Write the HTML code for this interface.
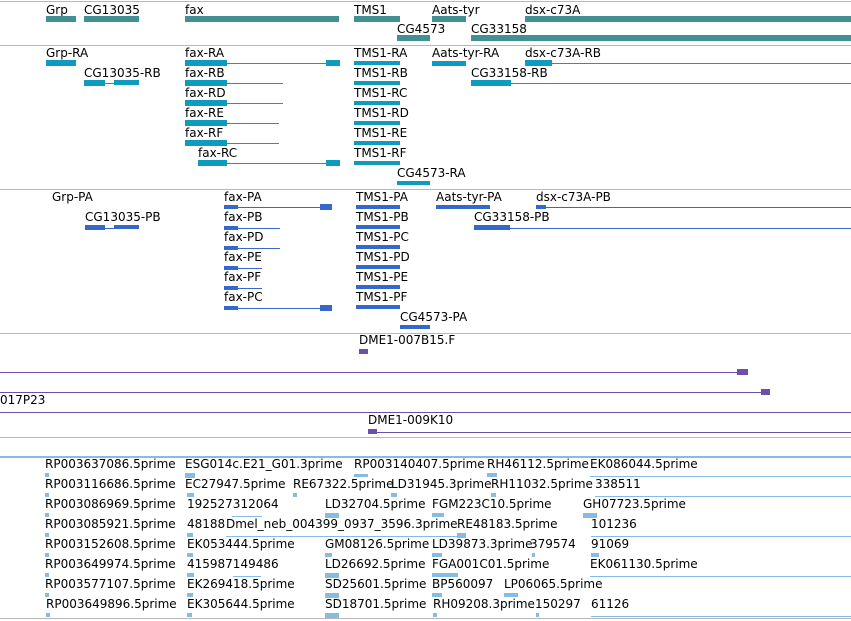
<!DOCTYPE html>
<html><head><meta charset="utf-8"><style>
body{margin:0;width:851px;height:621px;background:#fff;position:relative;overflow:hidden;font-family:"DejaVu Sans","Liberation Sans",sans-serif}
.t{position:absolute;font-size:12px;line-height:13px;white-space:nowrap;color:#000}
.b{position:absolute;height:6px}
.l{position:absolute;height:1px}
.s{position:absolute;left:0;width:851px;height:1px;background:#b8b8b8}
.g{background:#428f94}.c{background:#0f9bbd}.p{background:#3468cc}.v{background:#6b4fa8}.e{background:#86bce0}
</style></head><body>
<div class="s" style="top:1px"></div>
<!-- genes -->
<div class="t" style="left:46px;top:4px">Grp</div><div class="b g" style="left:46px;top:16px;width:30px"></div>
<div class="t" style="left:84px;top:4px">CG13035</div><div class="b g" style="left:84px;top:16px;width:55px"></div>
<div class="t" style="left:185px;top:4px">fax</div><div class="b g" style="left:185px;top:16px;width:154px"></div>
<div class="t" style="left:354px;top:4px">TMS1</div><div class="b g" style="left:354px;top:16px;width:46px"></div>
<div class="t" style="left:432px;top:4px">Aats-tyr</div><div class="b g" style="left:432px;top:16px;width:34px"></div>
<div class="t" style="left:525px;top:4px">dsx-c73A</div><div class="b g" style="left:525px;top:16px;width:326px"></div>
<div class="t" style="left:397px;top:23px">CG4573</div><div class="b g" style="left:397px;top:35px;width:33px"></div>
<div class="t" style="left:471px;top:23px">CG33158</div><div class="b g" style="left:471px;top:35px;width:380px"></div>
<div class="s" style="top:45px"></div>
<!-- transcripts -->
<div class="t" style="left:46px;top:47px">Grp-RA</div><div class="b c" style="left:46px;top:60px;width:30px"></div>
<div class="t" style="left:84px;top:67px">CG13035-RB</div><div class="b c" style="left:84px;top:80px;width:21px"></div><div class="l c" style="left:84px;top:83px;width:55px"></div><div class="b c" style="left:114px;top:80px;width:25px;height:5px"></div>
<div class="t" style="left:185px;top:47px">fax-RA</div><div class="b c" style="left:185px;top:60px;width:42px"></div><div class="l c" style="left:185px;top:63px;width:155px"></div><div class="b c" style="left:326px;top:60px;width:14px"></div>
<div class="t" style="left:185px;top:67px">fax-RB</div><div class="b c" style="left:185px;top:80px;width:42px"></div><div class="l c" style="left:185px;top:83px;width:98px"></div>
<div class="t" style="left:185px;top:87px">fax-RD</div><div class="b c" style="left:185px;top:100px;width:42px"></div><div class="l c" style="left:185px;top:103px;width:98px"></div>
<div class="t" style="left:185px;top:107px">fax-RE</div><div class="b c" style="left:185px;top:120px;width:42px"></div><div class="l c" style="left:185px;top:123px;width:94px"></div>
<div class="t" style="left:185px;top:127px">fax-RF</div><div class="b c" style="left:185px;top:140px;width:42px"></div><div class="l c" style="left:185px;top:143px;width:94px"></div>
<div class="t" style="left:198px;top:147px">fax-RC</div><div class="b c" style="left:198px;top:160px;width:29px"></div><div class="l c" style="left:198px;top:163px;width:142px"></div><div class="b c" style="left:326px;top:160px;width:14px"></div>
<div class="t" style="left:354px;top:47px">TMS1-RA</div><div class="b c" style="left:354px;top:61px;width:46px;height:4px"></div>
<div class="t" style="left:354px;top:67px">TMS1-RB</div><div class="b c" style="left:354px;top:81px;width:46px;height:4px"></div>
<div class="t" style="left:354px;top:87px">TMS1-RC</div><div class="b c" style="left:354px;top:101px;width:46px;height:4px"></div>
<div class="t" style="left:354px;top:107px">TMS1-RD</div><div class="b c" style="left:354px;top:121px;width:46px;height:4px"></div>
<div class="t" style="left:354px;top:127px">TMS1-RE</div><div class="b c" style="left:354px;top:141px;width:46px;height:4px"></div>
<div class="t" style="left:354px;top:147px">TMS1-RF</div><div class="b c" style="left:354px;top:161px;width:46px;height:4px"></div>
<div class="t" style="left:397px;top:167px">CG4573-RA</div><div class="b c" style="left:397px;top:181px;width:33px;height:4px"></div>
<div class="t" style="left:432px;top:47px">Aats-tyr-RA</div><div class="b c" style="left:432px;top:61px;width:34px;height:5px"></div>
<div class="t" style="left:525px;top:47px">dsx-c73A-RB</div><div class="b c" style="left:525px;top:60px;width:27px"></div><div class="l c" style="left:525px;top:63px;width:326px"></div>
<div class="t" style="left:471px;top:67px">CG33158-RB</div><div class="b c" style="left:471px;top:80px;width:40px"></div><div class="l c" style="left:471px;top:83px;width:380px"></div>
<div class="s" style="top:189px"></div>
<!-- proteins -->
<div class="t" style="left:52px;top:191px">Grp-PA</div>
<div class="t" style="left:85px;top:211px">CG13035-PB</div><div class="b p" style="left:85px;top:225px;width:20px;height:5px"></div><div class="l p" style="left:85px;top:228px;width:54px"></div><div class="b p" style="left:114px;top:225px;width:25px;height:4px"></div>
<div class="t" style="left:224px;top:191px">fax-PA</div><div class="l p" style="left:224px;top:207px;width:108px"></div><div class="b p" style="left:224px;top:205px;width:14px;height:4px"></div><div class="b p" style="left:320px;top:204px;width:12px"></div>
<div class="t" style="left:224px;top:211px">fax-PB</div><div class="l p" style="left:224px;top:228px;width:56px"></div><div class="b p" style="left:224px;top:226px;width:14px;height:4px"></div>
<div class="t" style="left:224px;top:231px">fax-PD</div><div class="l p" style="left:224px;top:248px;width:56px"></div><div class="b p" style="left:224px;top:246px;width:14px;height:4px"></div>
<div class="t" style="left:224px;top:251px">fax-PE</div><div class="l p" style="left:224px;top:268px;width:38px"></div><div class="b p" style="left:224px;top:266px;width:14px;height:4px"></div>
<div class="t" style="left:224px;top:271px">fax-PF</div><div class="l p" style="left:224px;top:288px;width:38px"></div><div class="b p" style="left:224px;top:286px;width:14px;height:4px"></div>
<div class="t" style="left:224px;top:291px">fax-PC</div><div class="l p" style="left:224px;top:308px;width:108px"></div><div class="b p" style="left:224px;top:306px;width:14px;height:4px"></div><div class="b p" style="left:320px;top:305px;width:12px"></div>
<div class="t" style="left:356px;top:191px">TMS1-PA</div><div class="b p" style="left:356px;top:205px;width:44px;height:4px"></div>
<div class="t" style="left:356px;top:211px">TMS1-PB</div><div class="b p" style="left:356px;top:225px;width:44px;height:4px"></div>
<div class="t" style="left:356px;top:231px">TMS1-PC</div><div class="b p" style="left:356px;top:245px;width:44px;height:4px"></div>
<div class="t" style="left:356px;top:251px">TMS1-PD</div><div class="b p" style="left:356px;top:265px;width:44px;height:4px"></div>
<div class="t" style="left:356px;top:271px">TMS1-PE</div><div class="b p" style="left:356px;top:285px;width:44px;height:4px"></div>
<div class="t" style="left:356px;top:291px">TMS1-PF</div><div class="b p" style="left:356px;top:305px;width:44px;height:4px"></div>
<div class="t" style="left:400px;top:311px">CG4573-PA</div><div class="b p" style="left:400px;top:325px;width:30px;height:4px"></div>
<div class="t" style="left:436px;top:191px">Aats-tyr-PA</div><div class="b p" style="left:436px;top:205px;width:54px;height:4px"></div>
<div class="t" style="left:536px;top:191px">dsx-c73A-PB</div><div class="l p" style="left:536px;top:207px;width:315px"></div><div class="b p" style="left:536px;top:205px;width:10px;height:4px"></div>
<div class="t" style="left:474px;top:211px">CG33158-PB</div><div class="b p" style="left:474px;top:225px;width:36px;height:5px"></div><div class="l p" style="left:474px;top:228px;width:377px"></div>
<div class="s" style="top:333px"></div>
<!-- clones -->
<div class="t" style="left:359px;top:334px">DME1-007B15.F</div><div class="b v" style="left:359px;top:349px;width:9px;height:5px"></div>
<div class="l v" style="left:0;top:372px;width:748px"></div><div class="b v" style="left:737px;top:369px;width:11px;height:6px"></div>
<div class="l v" style="left:0;top:392px;width:770px"></div><div class="b v" style="left:761px;top:389px;width:9px;height:6px"></div>
<div class="t" style="left:0;top:394px">017P23</div>
<div class="l v" style="left:0;top:412px;width:851px"></div>
<div class="t" style="left:368px;top:414px">DME1-009K10</div><div class="l v" style="left:368px;top:432px;width:483px"></div><div class="b v" style="left:368px;top:429px;width:9px;height:5px"></div>
<div class="s" style="top:437px"></div>
<!-- ESTs -->
<div class="l e" style="left:0;top:456px;width:851px;height:2px"></div>
<div class="t" style="left:45px;top:458px">RP003637086.5prime</div><div class="t" style="left:185px;top:458px">ESG014c.E21_G01.3prime</div><div class="t" style="left:354px;top:458px">RP003140407.5prime</div><div class="t" style="left:487px;top:458px">RH46112.5prime</div><div class="t" style="left:590px;top:458px">EK086044.5prime</div>
<div class="b e" style="left:45px;top:473px;width:4px;height:4px"></div><div class="b e" style="left:185px;top:473px;width:10px;height:5px"></div><div class="b e" style="left:354px;top:474px;width:14px;height:3px"></div><div class="b e" style="left:487px;top:473px;width:10px;height:4px"></div><div class="l e" style="left:590px;top:476px;width:261px"></div>
<div class="t" style="left:45px;top:478px">RP003116686.5prime</div><div class="t" style="left:185px;top:478px">EC27947.5prime</div><div class="t" style="left:293px;top:478px">RE67322.5prime</div><div class="t" style="left:391px;top:478px">LD31945.3prime</div><div class="t" style="left:491px;top:478px">RH11032.5prime</div><div class="t" style="left:595px;top:478px">338511</div>
<div class="b e" style="left:45px;top:493px;width:4px;height:4px"></div><div class="b e" style="left:187px;top:493px;width:7px;height:4px"></div><div class="b e" style="left:293px;top:493px;width:4px;height:4px"></div><div class="b e" style="left:391px;top:493px;width:6px;height:4px"></div><div class="b e" style="left:491px;top:493px;width:5px;height:4px"></div><div class="l e" style="left:595px;top:496px;width:256px"></div>
<div class="t" style="left:45px;top:498px">RP003086969.5prime</div><div class="t" style="left:187px;top:498px">192527312064</div><div class="t" style="left:325px;top:498px">LD32704.5prime</div><div class="t" style="left:432px;top:498px">FGM223C10.5prime</div><div class="t" style="left:583px;top:498px">GH07723.5prime</div>
<div class="b e" style="left:45px;top:513px;width:4px;height:4px"></div><div class="l e" style="left:232px;top:516px;width:30px"></div><div class="b e" style="left:325px;top:513px;width:14px;height:5px"></div><div class="b e" style="left:432px;top:513px;width:12px;height:4px"></div><div class="b e" style="left:583px;top:513px;width:14px;height:5px"></div>
<div class="t" style="left:45px;top:518px">RP003085921.5prime</div><div class="t" style="left:187px;top:518px">48188</div><div class="t" style="left:226px;top:518px">Dmel_neb_004399_0937_3596.3prime</div><div class="t" style="left:457px;top:518px">RE48183.5prime</div><div class="t" style="left:591px;top:518px">101236</div>
<div class="b e" style="left:45px;top:533px;width:4px;height:4px"></div><div class="b e" style="left:187px;top:533px;width:6px;height:4px"></div><div class="l e" style="left:226px;top:536px;width:240px"></div><div class="b e" style="left:457px;top:533px;width:9px;height:5px"></div><div class="l e" style="left:591px;top:536px;width:260px"></div>
<div class="t" style="left:45px;top:538px">RP003152608.5prime</div><div class="t" style="left:187px;top:538px">EK053444.5prime</div><div class="t" style="left:325px;top:538px">GM08126.5prime</div><div class="t" style="left:432px;top:538px">LD39873.3prime</div><div class="t" style="left:530px;top:538px">379574</div><div class="t" style="left:591px;top:538px">91069</div>
<div class="b e" style="left:45px;top:553px;width:4px;height:4px"></div><div class="b e" style="left:187px;top:553px;width:6px;height:4px"></div><div class="b e" style="left:325px;top:553px;width:7px;height:4px"></div><div class="b e" style="left:432px;top:553px;width:10px;height:4px"></div><div class="b e" style="left:532px;top:553px;width:3px;height:4px"></div><div class="b e" style="left:591px;top:553px;width:8px;height:4px"></div>
<div class="t" style="left:45px;top:558px">RP003649974.5prime</div><div class="t" style="left:187px;top:558px">415987149486</div><div class="t" style="left:325px;top:558px">LD26692.5prime</div><div class="t" style="left:432px;top:558px">FGA001C01.5prime</div><div class="t" style="left:590px;top:558px">EK061130.5prime</div>
<div class="b e" style="left:45px;top:573px;width:4px;height:4px"></div><div class="b e" style="left:187px;top:573px;width:7px;height:4px"></div><div class="l e" style="left:233px;top:576px;width:28px"></div><div class="b e" style="left:325px;top:573px;width:14px;height:5px"></div><div class="b e" style="left:432px;top:573px;width:26px;height:4px"></div><div class="l e" style="left:590px;top:576px;width:261px"></div>
<div class="t" style="left:45px;top:578px">RP003577107.5prime</div><div class="t" style="left:187px;top:578px">EK269418.5prime</div><div class="t" style="left:325px;top:578px">SD25601.5prime</div><div class="t" style="left:432px;top:578px">BP560097</div><div class="t" style="left:504px;top:578px">LP06065.5prime</div>
<div class="b e" style="left:45px;top:593px;width:4px;height:4px"></div><div class="b e" style="left:187px;top:593px;width:6px;height:4px"></div><div class="b e" style="left:325px;top:593px;width:14px;height:5px"></div><div class="b e" style="left:432px;top:593px;width:10px;height:4px"></div><div class="b e" style="left:504px;top:593px;width:14px;height:4px"></div>
<div class="t" style="left:46px;top:598px">RP003649896.5prime</div><div class="t" style="left:187px;top:598px">EK305644.5prime</div><div class="t" style="left:325px;top:598px">SD18701.5prime</div><div class="t" style="left:433px;top:598px">RH09208.3prime</div><div class="t" style="left:535px;top:598px">150297</div><div class="t" style="left:591px;top:598px">61126</div>
<div class="b e" style="left:46px;top:613px;width:4px;height:4px"></div><div class="b e" style="left:187px;top:613px;width:5px;height:4px"></div><div class="b e" style="left:325px;top:613px;width:14px;height:5px"></div><div class="b e" style="left:433px;top:613px;width:4px;height:4px"></div><div class="b e" style="left:536px;top:613px;width:3px;height:4px"></div><div class="l e" style="left:591px;top:616px;width:260px"></div>
<div class="s" style="top:618px"></div>
</body></html>
